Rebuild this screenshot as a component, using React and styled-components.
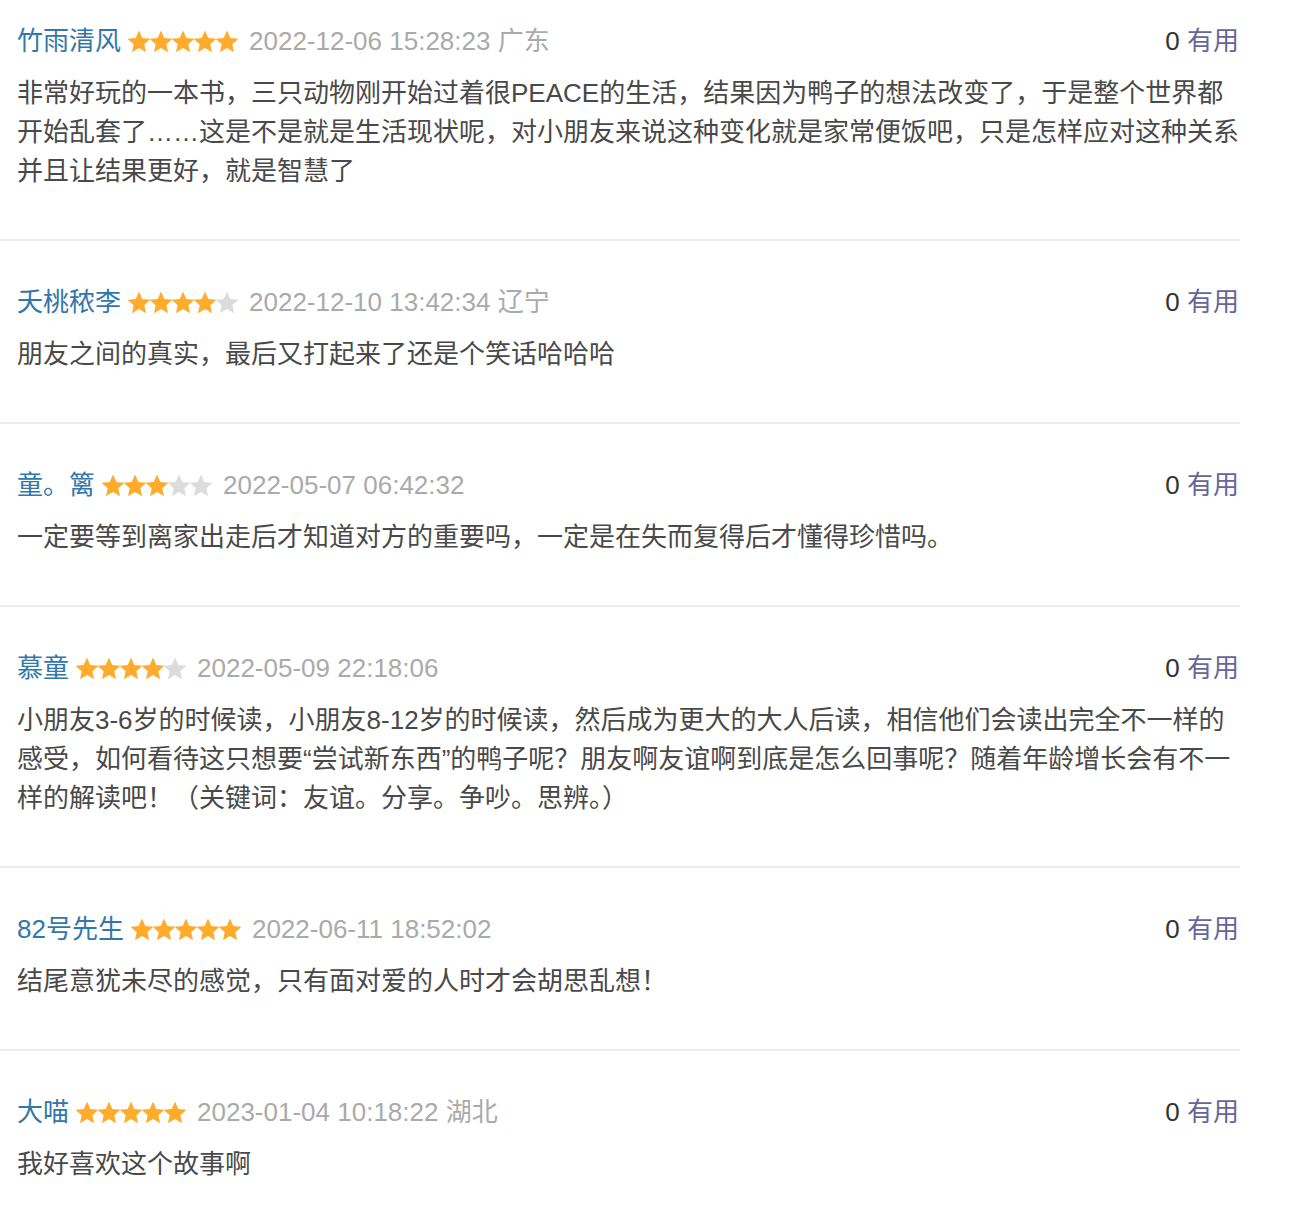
import React from "react";
import styled, { createGlobalStyle } from "styled-components";

const Global = createGlobalStyle`
  html, body { margin: 0; padding: 0; background: #fff; }
  body { font-family: "Liberation Sans", "Noto Sans CJK SC", sans-serif; }
`;

const List = styled.div`
  width: 1240px;
`;

const Item = styled.div`
  padding: 42px 1px 48px 17px;
  border-bottom: 2px solid #ececec;
  &:first-child { padding-top: 22px; }
  &:last-child { border-bottom: none; }
`;

const Header = styled.div`
  display: flex;
  align-items: center;
  justify-content: space-between;
  height: 39px;
  margin-bottom: 13px;
  font-size: 26px;
  line-height: 39px;
`;

const Meta = styled.div`
  display: flex;
  align-items: center;
`;

const Name = styled.span`
  color: #3377aa;
`;

const Stars = styled.svg`
  margin: 0 11px 0 7px;
  display: block;
`;

const DateText = styled.span`
  color: #aaaaaa;
`;

const Vote = styled.div`
  color: #333;
  white-space: nowrap;
`;

const Useful = styled.span`
  color: #666699;
`;

const Body = styled.p`
  margin: 0;
  font-size: 26px;
  line-height: 39px;
  color: #494949;
  word-break: break-all;
`;

const starPoints = (cx, cy, R, r) => {
  const pts = [];
  for (let i = 0; i < 10; i++) {
    const rad = i % 2 === 0 ? R : r;
    const a = (Math.PI / 5) * i - Math.PI / 2;
    pts.push(`${(cx + rad * Math.cos(a)).toFixed(2)},${(cy + rad * Math.sin(a)).toFixed(2)}`);
  }
  return pts.join(" ");
};

function Rating({ value }) {
  return (
    <Stars width="110" height="24" viewBox="0 0 110 24">
      {[0, 1, 2, 3, 4].map((i) => (
        <polygon
          key={i}
          points={starPoints(11 + i * 22, 12.5, 12, 5.6)}
          fill={i < value ? "#ffac2d" : "#dcdcdc"}
        />
      ))}
    </Stars>
  );
}

const reviews = [
  {
    name: "竹雨清风",
    stars: 5,
    date: "2022-12-06 15:28:23 广东",
    text: "非常好玩的一本书，三只动物刚开始过着很PEACE的生活，结果因为鸭子的想法改变了，于是整个世界都开始乱套了……这是不是就是生活现状呢，对小朋友来说这种变化就是家常便饭吧，只是怎样应对这种关系并且让结果更好，就是智慧了",
  },
  {
    name: "夭桃秾李",
    stars: 4,
    date: "2022-12-10 13:42:34 辽宁",
    text: "朋友之间的真实，最后又打起来了还是个笑话哈哈哈",
  },
  {
    name: "童。篱",
    stars: 3,
    date: "2022-05-07 06:42:32",
    text: "一定要等到离家出走后才知道对方的重要吗，一定是在失而复得后才懂得珍惜吗。",
  },
  {
    name: "慕童",
    stars: 4,
    date: "2022-05-09 22:18:06",
    text: "小朋友3-6岁的时候读，小朋友8-12岁的时候读，然后成为更大的大人后读，相信他们会读出完全不一样的感受，如何看待这只想要“尝试新东西”的鸭子呢？朋友啊友谊啊到底是怎么回事呢？随着年龄增长会有不一样的解读吧！（关键词：友谊。分享。争吵。思辨。）",
  },
  {
    name: "82号先生",
    stars: 5,
    date: "2022-06-11 18:52:02",
    text: "结尾意犹未尽的感觉，只有面对爱的人时才会胡思乱想！",
  },
  {
    name: "大喵",
    stars: 5,
    date: "2023-01-04 10:18:22 湖北",
    text: "我好喜欢这个故事啊",
  },
];

export default function App() {
  return (
    <>
      <Global />
      <List>
        {reviews.map((r, i) => (
          <Item key={i}>
            <Header>
              <Meta>
                <Name>{r.name}</Name>
                <Rating value={r.stars} />
                <DateText>{r.date}</DateText>
              </Meta>
              <Vote>
                0 <Useful>有用</Useful>
              </Vote>
            </Header>
            <Body>{r.text}</Body>
          </Item>
        ))}
      </List>
    </>
  );
}
